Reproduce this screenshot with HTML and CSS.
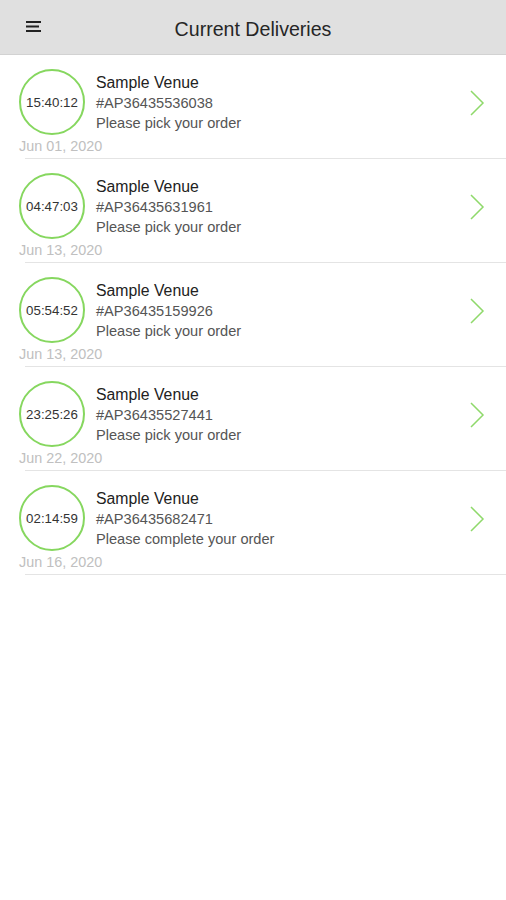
FILE: index.html
```html
<!DOCTYPE html>
<html lang="en">
<head>
  <meta charset="UTF-8" />
  <title>Current Deliveries</title>
  <link rel="stylesheet" href="styles.css">
</head>
<body>

<header class="topbar">
  <button class="menu-btn" aria-label="Menu">
    <svg width="16" height="11" viewBox="0 0 16 11">
      <rect x="0" y="0" width="15" height="2" fill="#222"/>
      <rect x="0" y="4.5" width="13" height="2" fill="#222"/>
      <rect x="0" y="9" width="15" height="2" fill="#222"/>
    </svg>
  </button>
  <h1 class="title">Current Deliveries</h1>
</header>

<ul class="deliveries">
  <li class="delivery">
    <div class="delivery-main">
      <div class="timer">15:40:12</div>
      <div class="info">
        <div class="venue">Sample Venue</div>
        <div class="order">#AP36435536038</div>
        <div class="status">Please pick your order</div>
      </div>
      <svg class="chevron" width="16" height="28" viewBox="0 0 16 28"><polyline points="2,2 14,14 2,26" fill="none" stroke="#8fd96b" stroke-width="1.5"/></svg>
    </div>
    <div class="date">Jun 01, 2020</div>
  </li>
  <li class="delivery">
    <div class="delivery-main">
      <div class="timer">04:47:03</div>
      <div class="info">
        <div class="venue">Sample Venue</div>
        <div class="order">#AP36435631961</div>
        <div class="status">Please pick your order</div>
      </div>
      <svg class="chevron" width="16" height="28" viewBox="0 0 16 28"><polyline points="2,2 14,14 2,26" fill="none" stroke="#8fd96b" stroke-width="1.5"/></svg>
    </div>
    <div class="date">Jun 13, 2020</div>
  </li>
  <li class="delivery">
    <div class="delivery-main">
      <div class="timer">05:54:52</div>
      <div class="info">
        <div class="venue">Sample Venue</div>
        <div class="order">#AP36435159926</div>
        <div class="status">Please pick your order</div>
      </div>
      <svg class="chevron" width="16" height="28" viewBox="0 0 16 28"><polyline points="2,2 14,14 2,26" fill="none" stroke="#8fd96b" stroke-width="1.5"/></svg>
    </div>
    <div class="date">Jun 13, 2020</div>
  </li>
  <li class="delivery">
    <div class="delivery-main">
      <div class="timer">23:25:26</div>
      <div class="info">
        <div class="venue">Sample Venue</div>
        <div class="order">#AP36435527441</div>
        <div class="status">Please pick your order</div>
      </div>
      <svg class="chevron" width="16" height="28" viewBox="0 0 16 28"><polyline points="2,2 14,14 2,26" fill="none" stroke="#8fd96b" stroke-width="1.5"/></svg>
    </div>
    <div class="date">Jun 22, 2020</div>
  </li>
  <li class="delivery">
    <div class="delivery-main">
      <div class="timer">02:14:59</div>
      <div class="info">
        <div class="venue">Sample Venue</div>
        <div class="order">#AP36435682471</div>
        <div class="status">Please complete your order</div>
      </div>
      <svg class="chevron" width="16" height="28" viewBox="0 0 16 28"><polyline points="2,2 14,14 2,26" fill="none" stroke="#8fd96b" stroke-width="1.5"/></svg>
    </div>
    <div class="date">Jun 16, 2020</div>
  </li>
</ul>

</body>
</html>
```

FILE: styles.css
```css
body {
  margin: 0;
  font-family: "Liberation Sans", Arial, sans-serif;
  background: #fff;
  color: #222;
}
.topbar {
  height: 54px;
  background: #e0e0e0;
  border-bottom: 1px solid #d2d2d2;
  display: flex;
  align-items: center;
  justify-content: center;
  position: relative;
}
.menu-btn {
  position: absolute;
  left: 26px;
  top: 21px;
  padding: 0;
  border: 0;
  background: none;
  line-height: 0;
}
.title {
  margin: 4px 0 0;
  font-size: 19.6px;
  font-weight: normal;
  color: #262626;
}
.deliveries {
  list-style: none;
  margin: 0;
  padding: 0;
}
.delivery {
  margin-left: 25px;
  padding-top: 14px;
  padding-bottom: 3px;
  border-bottom: 1px solid #e4e4e4;
}
.delivery-main {
  display: flex;
  align-items: flex-start;
  margin-left: -6px;
}
.timer {
  width: 62px;
  height: 62px;
  border: 2px solid #86d75f;
  border-radius: 50%;
  display: flex;
  align-items: center;
  justify-content: center;
  font-size: 13.3px;
  color: #333;
  flex-shrink: 0;
}
.info {
  margin-left: 11px;
  margin-top: 4px;
  flex: 1;
  font-size: 14.6px;
  line-height: 20px;
  color: #555;
}
.venue {
  font-size: 15.8px;
  color: #222;
}
.chevron {
  margin-top: 20px;
  margin-right: 21px;
}
.date {
  margin: 2px 0 0 -6px;
  font-size: 14.4px;
  line-height: 18px;
  color: #c0c0c0;
}
```
